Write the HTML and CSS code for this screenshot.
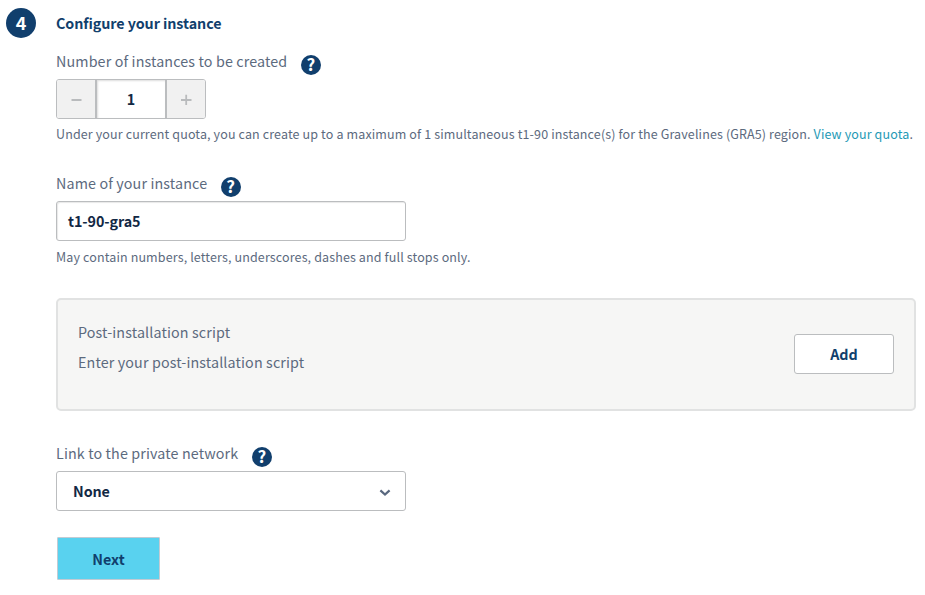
FILE: index.html
```html
<!DOCTYPE html>
<html lang="en">
<head>
<meta charset="utf-8">
<title>Configure your instance</title>
<link rel="stylesheet" href="styles.css">
</head>
<body>
<main class="step">
  <div class="step-number">4</div>
  <form class="step-body">
    <h2 class="step-title">Configure your instance</h2>

    <section class="field field-count">
      <div class="label-row"><span class="label">Number of instances to be created</span><span class="help">?</span></div>
      <div class="stepper">
        <button type="button" class="stepper-btn" disabled aria-label="Decrease"><svg width="12" height="12" viewBox="0 0 12 12"><path d="M1.5 7H11.5"/></svg></button>
        <div class="stepper-value">1</div>
        <button type="button" class="stepper-btn stepper-plus" disabled aria-label="Increase"><svg width="12" height="12" viewBox="0 0 12 12"><path d="M1 7H11.5M6.2 1.7V12"/></svg></button>
      </div>
      <p class="hint">Under your current quota, you can create up to a maximum of 1 simultaneous t1-90 instance(s) for the Gravelines (GRA5) region. <a class="link">View your quota</a>.</p>
    </section>

    <section class="field field-name">
      <div class="label-row"><span class="label">Name of your instance</span><span class="help">?</span></div>
      <div class="input">t1-90-gra5</div>
      <p class="hint hint-name">May contain numbers, letters, underscores, dashes and full stops only.</p>
    </section>

    <section class="script-box">
      <div class="script-text">
        <p>Post-installation script</p>
        <p>Enter your post-installation script</p>
      </div>
      <button type="button" class="btn-add">Add</button>
    </section>

    <section class="field field-network">
      <div class="label-row"><span class="label">Link to the private network</span><span class="help">?</span></div>
      <div class="input select">None<svg width="12" height="8" viewBox="0 0 12 8"><path d="M1.4 1.4L6 5.6L10.6 1.4"/></svg></div>
    </section>

    <button type="button" class="btn-next">Next</button>
  </form>
</main>
</body>
</html>
```
FILE: styles.css
```css
* { box-sizing: border-box; }
body {
  margin: 0;
  background: #fff;
  color: #5c6a7e;
  font-family: "Noto Sans CJK SC", "Noto Sans", sans-serif;
  font-size: 14.3px;
  line-height: 20px;
}
h2, p { margin: 0; }
button { font: inherit; padding: 0; }
.step {
  display: grid;
  grid-template-columns: 30px 860px;
  column-gap: 20px;
  padding: 8px 0 0 6px;
}
.step-number {
  width: 30px;
  height: 30px;
  border-radius: 50%;
  background: #113f6d;
  color: #fff;
  font-size: 18px;
  font-weight: 700;
  line-height: 29px;
  text-align: center;
}
.step-title {
  padding-top: 5px;
  height: 38px;
  color: #113f6d;
  font-size: 14.3px;
  font-weight: 700;
  letter-spacing: -0.07px;
  line-height: 20px;
}
.label-row {
  display: flex;
  height: 33px;
  padding-top: 5px;
  gap: 13.5px;
}
.label { letter-spacing: 0.13px; }
.help {
  width: 20px;
  height: 20px;
  margin-top: 4px;
  border-radius: 50%;
  background: #113f6d;
  color: #fff;
  font-size: 17px;
  font-weight: 700;
  line-height: 18px;
  text-align: center;
}
.stepper {
  display: flex;
  width: 150px;
  height: 40px;
  border: 1px solid #bbbdbf;
  border-radius: 3px;
  overflow: hidden;
}
.stepper-btn {
  display: grid;
  place-items: center;
  width: 38px;
  border: 0;
  background: #f1f1f1;
}
.stepper-btn svg { fill: none; stroke: #b9bbbd; stroke-width: 1.8; }
.stepper-value {
  flex: 1;
  border: solid #bbbdbf;
  border-width: 0 2px 0 2px;
  box-shadow: inset 1px 1px 2px #dedede;
  color: #122844;
  font-weight: 700;
  line-height: 38px;
  text-align: center;
}
.hint {
  padding-top: 6px;
  font-size: 12.5px;
  letter-spacing: 0.13px;
  line-height: 18px;
  white-space: nowrap;
}
.hint-name { padding-top: 7px; }
.link { color: #2499b5; }
.field-count { height: 122px; }
.field-name { height: 130px; }
.input {
  width: 350px;
  height: 40px;
  padding: 0 11px;
  border: 1px solid #bbbdbf;
  border-radius: 3px;
  box-shadow: inset 1px 1px 1px #e8e8e8;
  color: #122844;
  font-weight: 700;
  letter-spacing: -0.07px;
  line-height: 38px;
}
.script-box {
  display: flex;
  justify-content: space-between;
  align-items: flex-start;
  width: 860px;
  height: 113px;
  padding: 17px 20px 0;
  border: 2px solid #e1e2e2;
  border-radius: 5px;
  background: #f6f6f5;
}
.script-text { letter-spacing: 0.13px; line-height: 30px; }
.btn-add {
  width: 100px;
  height: 40px;
  margin-top: 17px;
  border: 1px solid #bbbdbf;
  border-radius: 3px;
  background: #fff;
  color: #113f6d;
  font-weight: 700;
}
.field-network { padding-top: 27px; }
.select {
  display: flex;
  align-items: center;
  justify-content: space-between;
  padding: 0 14px 0 16px;
  box-shadow: none;
}
.select svg { margin-top: 4px; fill: none; stroke: #59687f; stroke-width: 2.2; }
.btn-next {
  display: block;
  width: 103px;
  height: 43px;
  margin: 26px 0 0 1px;
  border: 1px solid #c3cbd3;
  border-radius: 1px;
  background: #59d2ef;
  color: #113f6d;
  font-weight: 700;
}
```
